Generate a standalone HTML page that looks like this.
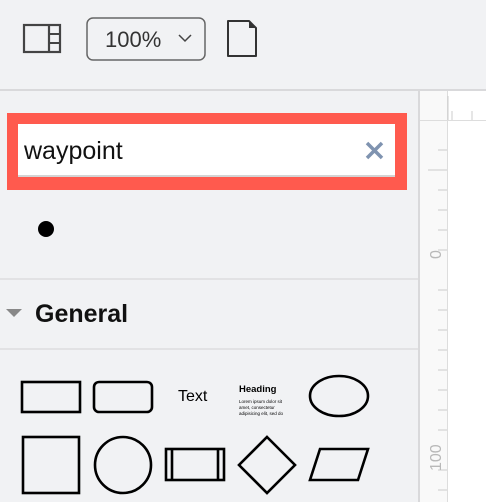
<!DOCTYPE html>
<html><head><style>
body{margin:0;width:486px;height:502px;overflow:hidden;background:#f1f2f4;font-family:"Liberation Sans",sans-serif;position:relative}
.a{position:absolute}
</style></head><body>
<div class="a" style="left:0;top:0;width:486px;height:89px;background:#f1f2f4"></div>
<div class="a" style="left:0;top:89px;width:486px;height:2px;background:#d9d9db"></div>
<svg class="a" style="left:0;top:0" width="270" height="89">
<rect x="24" y="25" width="36" height="27" fill="none" stroke="#444" stroke-width="2.2"/>
<line x1="49" y1="25" x2="49" y2="52" stroke="#444" stroke-width="2.2"/>
<line x1="49" y1="34" x2="60" y2="34" stroke="#444" stroke-width="2"/>
<line x1="49" y1="43" x2="60" y2="43" stroke="#444" stroke-width="2"/>
<rect x="87" y="18" width="118" height="42" rx="6" fill="none" stroke="#666" stroke-width="1.5"/>
<path d="M179 35 L185 41 L191 35" fill="none" stroke="#444" stroke-width="1.5"/>
<path d="M228 21 H249 L256 28 V56 H228 Z" fill="none" stroke="#333" stroke-width="2" stroke-linejoin="round"/>
<path d="M249 21 L256 28 H249 Z" fill="#333"/>
</svg>
<div class="a" style="left:105px;top:27px;font-size:22px;color:#333">100%</div>
<div class="a" style="left:418px;top:91px;width:2px;height:411px;background:#d9d9db"></div>
<div class="a" style="left:420px;top:91px;width:66px;height:411px;background:#fff"></div>
<div class="a" style="left:420px;top:91px;width:27px;height:411px;background:#f9f9f9"></div>
<div class="a" style="left:420px;top:120px;width:66px;height:1px;background:#ddd"></div>
<div class="a" style="left:447px;top:91px;width:1px;height:411px;background:#ddd"></div>
<svg class="a" style="left:420px;top:91px" width="66" height="411">
<g stroke="#ccc" stroke-width="1">
<line x1="28" y1="5" x2="28" y2="29"/><line x1="32" y1="20" x2="32" y2="29"/><line x1="52" y1="20" x2="52" y2="29"/>
<line x1="18" y1="59" x2="27" y2="59"/><line x1="8" y1="79" x2="27" y2="79"/><line x1="18" y1="99" x2="27" y2="99"/>
<line x1="18" y1="119" x2="27" y2="119"/><line x1="18" y1="139" x2="27" y2="139"/><line x1="18" y1="159" x2="27" y2="159"/>
<line x1="18" y1="199" x2="27" y2="199"/><line x1="18" y1="219" x2="27" y2="219"/><line x1="18" y1="239" x2="27" y2="239"/>
<line x1="18" y1="259" x2="27" y2="259"/><line x1="18" y1="279" x2="27" y2="279"/><line x1="18" y1="299" x2="27" y2="299"/>
<line x1="18" y1="319" x2="27" y2="319"/><line x1="18" y1="339" x2="27" y2="339"/><line x1="18" y1="379" x2="27" y2="379"/>
<line x1="18" y1="399" x2="27" y2="399"/>
</g>
<text transform="translate(21,168) rotate(-90)" font-size="16" fill="#b8b8b8" font-family="Liberation Sans">0</text>
<text transform="translate(21,380) rotate(-90)" font-size="16" fill="#b8b8b8" font-family="Liberation Sans">100</text>
</svg>
<div class="a" style="left:7px;top:113px;width:400px;height:77px;background:#ff5a4e"></div>
<div class="a" style="left:18px;top:124px;width:377px;height:52px;background:#fff"></div>
<div class="a" style="left:18px;top:175px;width:377px;height:2px;background:#d4d4d4"></div>
<div class="a" style="left:24px;top:137px;font-size:25px;color:#111">waypoint</div>
<svg class="a" style="left:365px;top:141px" width="20" height="20"><path d="M2 2 L17 17 M17 2 L2 17" stroke="#7f93b0" stroke-width="3.5"/></svg>
<div class="a" style="left:38px;top:221px;width:16px;height:16px;border-radius:50%;background:#000"></div>
<div class="a" style="left:0;top:278px;width:418px;height:2px;background:#e2e2e4"></div>
<svg class="a" style="left:5px;top:308px" width="18" height="10"><path d="M1 1 H17 L9 9 Z" fill="#888"/></svg>
<div class="a" style="left:35px;top:300px;font-size:25px;font-weight:bold;color:#111">General</div>
<div class="a" style="left:0;top:348px;width:418px;height:2px;background:#e2e2e4"></div>
<svg class="a" style="left:0;top:350px" width="418" height="152">
<g fill="none" stroke="#000" stroke-width="2.6">
<rect x="22" y="32" width="58" height="30"/>
<rect x="94" y="32" width="58" height="30" rx="5"/>
<ellipse cx="339" cy="46" rx="29" ry="20"/>
<rect x="23" y="87" width="56" height="56"/>
<circle cx="123" cy="115" r="28"/>
<rect x="166" y="99" width="58" height="31"/><line x1="172" y1="99" x2="172" y2="130"/><line x1="218" y1="99" x2="218" y2="130"/>
<path d="M267 87 L295 115 L267 143 L239 115 Z"/>
<path d="M320 99 H368 L358 130 H310 Z"/>
</g>
<text x="178" y="51" font-size="16" font-family="Liberation Sans">Text</text>
<text x="239" y="42" font-size="9.5" font-weight="bold" font-family="Liberation Sans">Heading</text>
<text x="239" y="53" font-size="4.5" font-family="Liberation Sans">Lorem ipsum dolor sit</text>
<text x="239" y="59" font-size="4.5" font-family="Liberation Sans">amet, consectetur</text>
<text x="239" y="65" font-size="4.5" font-family="Liberation Sans">adipisicing elit, sed do</text>
</svg>
</body></html>
